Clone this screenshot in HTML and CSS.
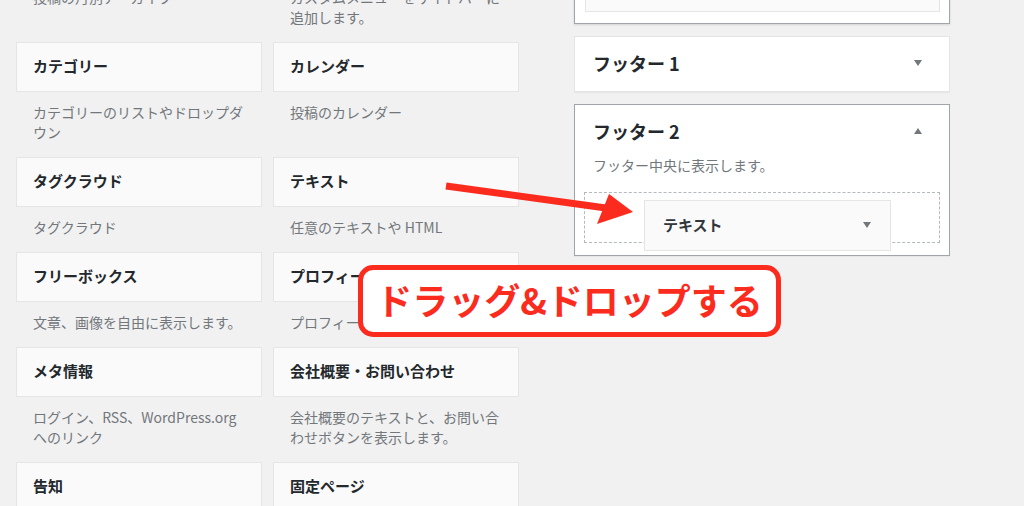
FILE: index.html
```html
<!DOCTYPE html>
<html lang="ja">
<head>
    <meta charset="UTF-8">
    <meta name="viewport" content="width=device-width, initial-scale=1.0">
    <title>ウィジェット</title>
    <link rel="stylesheet" href="styles.css">
</head>
<body>
    <div class="page">
        <!-- Available widgets -->
        <div class="widget-list">
            <div class="widget">
                <div class="widget-top">アーカイブ</div>
                <p class="widget-desc">投稿の月別アーカイブ</p>
            </div>
            <div class="widget">
                <div class="widget-top">カスタムメニュー</div>
                <p class="widget-desc">カスタムメニューをサイドバーに追加します。</p>
            </div>
            <div class="widget">
                <div class="widget-top">カテゴリー</div>
                <p class="widget-desc">カテゴリーのリストやドロップダウン</p>
            </div>
            <div class="widget">
                <div class="widget-top">カレンダー</div>
                <p class="widget-desc">投稿のカレンダー</p>
            </div>
            <div class="widget">
                <div class="widget-top">タグクラウド</div>
                <p class="widget-desc">タグクラウド</p>
            </div>
            <div class="widget">
                <div class="widget-top">テキスト</div>
                <p class="widget-desc">任意のテキストや HTML</p>
            </div>
            <div class="widget">
                <div class="widget-top">フリーボックス</div>
                <p class="widget-desc">文章、画像を自由に表示します。</p>
            </div>
            <div class="widget">
                <div class="widget-top">プロフィール</div>
                <p class="widget-desc">プロフィールを表示します。</p>
            </div>
            <div class="widget">
                <div class="widget-top">メタ情報</div>
                <p class="widget-desc">ログイン、RSS、WordPress.org へのリンク</p>
            </div>
            <div class="widget">
                <div class="widget-top">会社概要・お問い合わせ</div>
                <p class="widget-desc">会社概要のテキストと、お問い合わせボタンを表示します。</p>
            </div>
            <div class="widget">
                <div class="widget-top">告知</div>
                <p class="widget-desc">告知を表示します。</p>
            </div>
            <div class="widget">
                <div class="widget-top">固定ページ</div>
                <p class="widget-desc">固定ページのリスト</p>
            </div>
        </div>

        <!-- Sidebars -->
        <div class="sidebars">
            <div class="sidebar sidebar-prev">
                <div class="sidebar-widget"></div>
            </div>

            <div class="sidebar">
                <div class="sidebar-head">
                    <h2>フッター 1</h2>
                    <svg class="toggle" width="8" height="6" viewBox="0 0 8 6"><polygon points="0,0 8,0 4,6" fill="#72777c"/></svg>
                </div>
            </div>

            <div class="sidebar sidebar-open">
                <div class="sidebar-head">
                    <h2>フッター 2</h2>
                    <svg class="toggle" width="8" height="6" viewBox="0 0 8 6"><polygon points="0,6 8,6 4,0" fill="#72777c"/></svg>
                </div>
                <p class="sidebar-desc">フッター中央に表示します。</p>
                <div class="drop-zone">
                    <div class="dragging">
                        <span>テキスト</span>
                        <svg width="8" height="6" viewBox="0 0 8 6"><polygon points="0,0 8,0 4,6" fill="#72777c"/></svg>
                    </div>
                </div>
            </div>
        </div>
    </div>

    <!-- Annotation -->
    <svg class="arrow" width="1024" height="506" viewBox="0 0 1024 506">
        <line x1="446" y1="186" x2="606" y2="208" stroke="#fb2b1e" stroke-width="7"/>
        <polygon points="609,194 597,224 633,212" fill="#fb2b1e"/>
    </svg>
    <div class="callout">ドラッグ&amp;ドロップする</div>
</body>
</html>
```

FILE: styles.css
```css
* {
    margin: 0;
    padding: 0;
    box-sizing: border-box;
}

body {
    font-family: "Noto Sans CJK JP", sans-serif;
    color: #23282d;
    background-color: #f1f1f1;
    width: 1024px;
    height: 506px;
    overflow: hidden;
    position: relative;
}

.page {
    display: flex;
    align-items: flex-start;
    gap: 55px;
    padding-left: 16px;
}

/* Widget list */
.widget-list {
    display: grid;
    grid-template-columns: 246px 246px;
    column-gap: 11px;
    align-items: start;
    margin-top: -73px;
}

.widget-top {
    height: 50px;
    background-color: #fafafa;
    border: 1px solid #e5e5e5;
    padding: 0 16px 2px;
    font-size: 15px;
    font-weight: bold;
    line-height: 46px;
}

.widget-desc {
    padding: 10px 17px 15px;
    font-size: 14px;
    line-height: 20px;
    color: #72777c;
}

/* Sidebars */
.sidebars {
    width: 376px;
    display: flex;
    flex-direction: column;
    gap: 12px;
    margin-top: -40px;
}

.sidebar {
    background-color: #fff;
    border: 1px solid #e5e5e5;
    box-shadow: 0 1px 1px rgba(0, 0, 0, 0.04);
}

.sidebar-prev {
    border-color: #a0a5aa;
    padding: 0 9px 11px 10px;
    box-shadow: 0 1px 2px rgba(0, 0, 0, 0.12);
}

.sidebar-widget {
    height: 51px;
    background-color: #fafafa;
    border: 1px solid #e5e5e5;
}

.sidebar-head {
    display: flex;
    justify-content: space-between;
    align-items: center;
    padding: 14px 27px 16px 18px;
}

.sidebar-head h2 {
    font-size: 18px;
    line-height: 24px;
    font-weight: bold;
}

.sidebar-open {
    border-color: #a0a5aa;
    padding-bottom: 12px;
}

.sidebar-open .sidebar-head {
    padding-bottom: 12px;
}

.sidebar-desc {
    padding: 0 18px;
    margin-bottom: 17px;
    font-size: 14px;
    line-height: 20px;
    color: #72777c;
}

.drop-zone {
    position: relative;
    height: 51px;
    margin: 0 9px;
    border: 1px dashed #b4b9be;
}

.dragging {
    position: absolute;
    left: 59px;
    top: 7px;
    width: 247px;
    height: 51px;
    background-color: #fafafa;
    border: 1px solid #e5e5e5;
    display: flex;
    justify-content: space-between;
    align-items: center;
    padding: 0 19px 2px 18px;
    font-size: 15px;
    font-weight: bold;
    color: #32373c;
}

/* Annotation */
.arrow {
    position: absolute;
    left: 0;
    top: 0;
}

.callout {
    position: absolute;
    left: 358px;
    top: 265px;
    width: 423px;
    height: 72px;
    border: 5px solid #fb2b1e;
    border-radius: 15px;
    background-color: #fff;
    color: #fb2b1e;
    font-size: 36px;
    font-weight: bold;
    line-height: 58px;
    padding-bottom: 4px;
    text-align: center;
}
```
